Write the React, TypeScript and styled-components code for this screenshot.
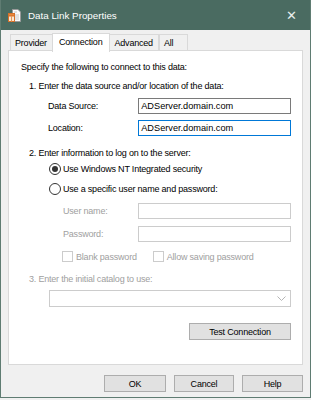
import styled, { createGlobalStyle } from 'styled-components';

const GlobalStyle = createGlobalStyle`
  html, body {
    margin: 0;
    padding: 0;
    background: #f0f0f0;
  }
  body {
    font-family: 'Liberation Sans', Arial, sans-serif;
    font-size: 9px;
    letter-spacing: -0.2px;
    color: #000;
  }
`;

const TABS = ['Provider', 'Connection', 'Advanced', 'All'];

const AppIcon = () => (
  <svg width="13" height="13" viewBox="0 0 13 13">
    <path d="M4.5 0.5 H10 L12.5 3 V12.5 H4.5 Z" fill="#fbfbfb" stroke="#9a9a9a" />
    <line x1="6" y1="3" x2="9" y2="3" stroke="#c8c8c8" />
    <line x1="7" y1="6" x2="11" y2="6" stroke="#c8c8c8" />
    <line x1="7" y1="8" x2="11" y2="8" stroke="#c8c8c8" />
    <line x1="7" y1="10" x2="11" y2="10" stroke="#c8c8c8" />
    <rect x="0.5" y="4.5" width="6" height="2.5" fill="#ec8a3c" stroke="#d5712a" />
    <rect x="0.5" y="7" width="6" height="5.5" fill="#fde6cf" stroke="#d5712a" />
    <line x1="3.5" y1="7" x2="3.5" y2="12.5" stroke="#e09a5e" />
  </svg>
);

const Chevron = () => (
  <svg width="9" height="6" viewBox="0 0 9 6">
    <polyline points="0.5,0.5 4.5,4.5 8.5,0.5" fill="none" stroke="#b5b5b5" strokeWidth="1" />
  </svg>
);

export default function App() {
  return (
    <Window>
      <GlobalStyle />
      <TitleBar>
        <AppIcon />
        <Title>Data Link Properties</Title>
        <Close>✕</Close>
      </TitleBar>
      <Body>
        <TabRow>
          {TABS.map((t) => (
            <Tab key={t} $active={t === 'Connection'}>
              {t}
            </Tab>
          ))}
        </TabRow>
        <Panel>
          <Intro>Specify the following to connect to this data:</Intro>
          <Step>1. Enter the data source and/or location of the data:</Step>
          <FieldRow $top={6}>
            <FieldLabel>Data Source:</FieldLabel>
            <TextBox>ADServer.domain.com</TextBox>
          </FieldRow>
          <FieldRow $top={6}>
            <FieldLabel>Location:</FieldLabel>
            <TextBox $focused>ADServer.domain.com</TextBox>
          </FieldRow>
          <Step $top={12}>2. Enter information to log on to the server:</Step>
          <RadioRow $top={4}>
            <Radio $checked />
            Use Windows NT Integrated security
          </RadioRow>
          <RadioRow $top={9}>
            <Radio />
            Use a specific user name and password:
          </RadioRow>
          <FieldRow $top={9} $disabled $indent={62}>
            <FieldLabel $width={76}>User name:</FieldLabel>
            <TextBox $disabled />
          </FieldRow>
          <FieldRow $top={7} $disabled $indent={62}>
            <FieldLabel $width={76}>Password:</FieldLabel>
            <TextBox $disabled />
          </FieldRow>
          <CheckRow>
            <CheckItem>
              <CheckBox />
              Blank password
            </CheckItem>
            <CheckItem>
              <CheckBox />
              Allow saving password
            </CheckItem>
          </CheckRow>
          <Step $top={12} $disabled>3. Enter the initial catalog to use:</Step>
          <Combo>
            <Chevron />
          </Combo>
          <ActionRow>
            <Button $width={102}>Test Connection</Button>
          </ActionRow>
        </Panel>
        <Footer>
          <Button $width={62}>OK</Button>
          <Button $width={60}>Cancel</Button>
          <Button $width={61}>Help</Button>
        </Footer>
      </Body>
    </Window>
  );
}

const Window = styled.div`
  box-sizing: border-box;
  width: 311px;
  height: 398px;
  border: 1px solid #5f7c72;
  border-top: none;
  display: flex;
  flex-direction: column;
  background: #f0f0f0;
`;

const TitleBar = styled.div`
  height: 30px;
  background: #4a6b61;
  display: flex;
  align-items: center;
  padding: 0 0 0 7px;
  gap: 7px;
  color: #fff;
  flex-shrink: 0;
`;

const Title = styled.div`
  font-size: 9.8px;
  letter-spacing: 0;
  flex: 1;
  margin-top: 1px;
`;

const Close = styled.div`
  width: 28px;
  text-align: center;
  font-size: 13px;
  color: #e8eeec;
  margin-right: 5px;
`;

const Body = styled.div`
  flex: 1;
  display: flex;
  flex-direction: column;
  padding: 3px 7px 0 7px;
`;

const TabRow = styled.div`
  display: flex;
  align-items: flex-end;
  height: 18px;
  padding-left: 2px;
  position: relative;
  z-index: 1;
`;

const Tab = styled.div<{ $active?: boolean }>`
  box-sizing: border-box;
  height: ${(p) => (p.$active ? '19px' : '17px')};
  margin: ${(p) => (p.$active ? '0 -1px -1px -1px' : '0')};
  padding: ${(p) => (p.$active ? '3px 7px 0 6px' : '3px 5px 0 4px')};
  border: 1px solid #d9d9d9;
  border-bottom: ${(p) => (p.$active ? 'none' : '1px solid #d9d9d9')};
  background: ${(p) => (p.$active ? '#fff' : '#f0f0f0')};
  z-index: ${(p) => (p.$active ? 2 : 0)};
  & + & {
    border-left: ${(p) => (p.$active ? '1px solid #d9d9d9' : 'none')};
  }
  &:last-child {
    padding-right: 14px;
  }
`;

const Panel = styled.div`
  box-sizing: border-box;
  height: 315px;
  background: #fff;
  border: 1px solid #d9d9d9;
  margin-top: -1px;
  padding: 11px 11px 0 12px;
  display: flex;
  flex-direction: column;
`;

const Intro = styled.div`
  line-height: 11px;
`;

const Step = styled.div<{ $top?: number; $disabled?: boolean }>`
  margin-top: ${(p) => p.$top ?? 8}px;
  padding-left: 8px;
  line-height: 11px;
  color: ${(p) => (p.$disabled ? '#a0a0a0' : '#000')};
`;

const FieldRow = styled.div<{ $top: number; $disabled?: boolean; $indent?: number }>`
  display: flex;
  align-items: center;
  margin-top: ${(p) => p.$top}px;
  padding-left: ${(p) => (p.$indent ?? 47) - 20}px;
  color: ${(p) => (p.$disabled ? '#a0a0a0' : '#000')};
`;

const FieldLabel = styled.div<{ $width?: number }>`
  width: ${(p) => p.$width ?? 91}px;
`;

const TextBox = styled.div<{ $focused?: boolean; $disabled?: boolean }>`
  box-sizing: border-box;
  width: 154px;
  height: 16px;
  padding: 0 2px;
  line-height: 14px;
  font-size: 9.2px;
  letter-spacing: 0;
  border: 1px solid ${(p) => (p.$focused ? '#0078d7' : p.$disabled ? '#cccccc' : '#7a7a7a')};
  background: #fff;
  color: #000;
`;

const RadioRow = styled.div<{ $top: number }>`
  display: flex;
  align-items: center;
  gap: 2px;
  margin-top: ${(p) => p.$top}px;
  padding-left: 28px;
  height: 11px;
`;

const Radio = styled.span<{ $checked?: boolean }>`
  box-sizing: border-box;
  width: 12px;
  height: 12px;
  border-radius: 50%;
  border: 1px solid #333;
  background: #fff;
  display: flex;
  align-items: center;
  justify-content: center;
  &::after {
    content: '';
    width: 6px;
    height: 6px;
    border-radius: 50%;
    background: #333;
    display: ${(p) => (p.$checked ? 'block' : 'none')};
  }
`;

const CheckRow = styled.div`
  display: flex;
  gap: 16px;
  margin-top: 9px;
  padding-left: 41px;
  color: #a0a0a0;
`;

const CheckItem = styled.div`
  display: flex;
  align-items: center;
  gap: 3px;
`;

const CheckBox = styled.span`
  box-sizing: border-box;
  width: 11px;
  height: 11px;
  border: 1px solid #cccccc;
  background: #fff;
`;

const Combo = styled.div`
  box-sizing: border-box;
  margin: 5px 0 0 28px;
  height: 17px;
  border: 1px solid #cccccc;
  display: flex;
  align-items: center;
  justify-content: flex-end;
  padding-right: 4px;
`;

const ActionRow = styled.div`
  display: flex;
  justify-content: flex-end;
  margin-top: 16px;
`;

const Button = styled.div<{ $width: number }>`
  box-sizing: border-box;
  width: ${(p) => p.$width}px;
  height: 17px;
  background: #e1e1e1;
  border: 1px solid #adadad;
  display: flex;
  align-items: center;
  justify-content: center;
`;

const Footer = styled.div`
  display: flex;
  justify-content: flex-end;
  gap: 8px;
  margin-top: 10px;
`;
